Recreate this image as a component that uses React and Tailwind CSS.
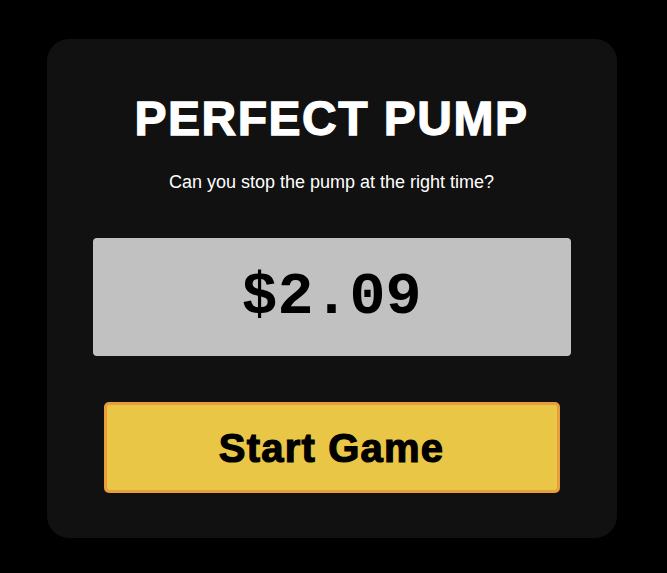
const App = () => {
  return (
    <div className="min-h-screen bg-black flex items-center justify-center pr-[4px] pt-[4px] font-['Liberation_Sans',Arial,sans-serif]">
      <div className="w-[570px] bg-[#111111] rounded-[22px] px-[46px] pt-[56px] pb-[45px] flex flex-col items-stretch">
        <h1 className="text-center text-white font-bold text-[48px] leading-none tracking-[1.5px] [-webkit-text-stroke:1.3px_white]">
          PERFECT PUMP
        </h1>
        <p className="mt-[30px] text-center text-white text-[18px] leading-none">
          Can you stop the pump at the right time?
        </p>
        <div className="mt-[47px] h-[118px] bg-[#c1c1c1] rounded-[4px] flex items-center justify-center">
          <span className="font-['Liberation_Mono','Courier_New',monospace] font-bold text-[60px] leading-none text-black">
            $2.09
          </span>
        </div>
        <button className="mt-[46px] mx-[11px] h-[91px] bg-[#e9c646] border-[3px] border-[#e89f3b] rounded-[5px] flex items-center justify-center text-black font-bold text-[40px] tracking-[1.2px] [-webkit-text-stroke:1.2px_black]">
          Start Game
        </button>
      </div>
    </div>
  );
};

export default App;
